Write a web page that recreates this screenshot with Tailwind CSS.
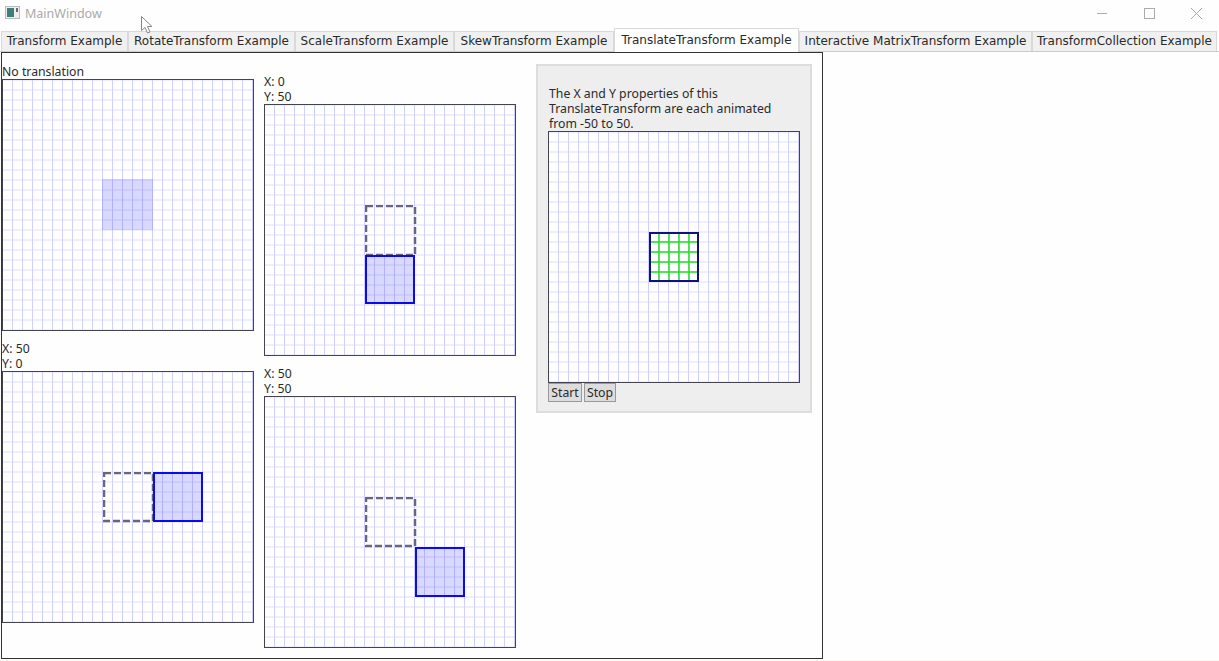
<!DOCTYPE html>
<html lang="en">
<head>
    <meta charset="UTF-8">
    <title>MainWindow</title>
    <script src="https://cdn.jsdelivr.net/npm/@tailwindcss/browser@4"></script>
</head>
<body class="bg-[#fefefe] h-[661px] w-[1219px] overflow-hidden relative font-['DejaVu_Sans',sans-serif] text-[12px] leading-[15px] text-[#2a2a2a]">
    <!-- Title bar -->
    <div class="h-[28px] flex items-center pl-[5px] pb-[2px]">
        <svg width="16" height="16" viewBox="0 0 16 16" class="mr-[4px]">
            <rect x="0.5" y="1.5" width="14" height="12" fill="#eee" stroke="#bbb"/>
            <rect x="2" y="3" width="7" height="9" fill="#3c7f78"/>
            <rect x="11" y="3" width="2" height="4" fill="#667"/>
        </svg>
        <span class="font-['Noto_Sans',sans-serif] text-[12.5px] text-[#aaa]">MainWindow</span>
        <div class="ml-auto flex mt-[2px]">
            <svg width="47" height="28" viewBox="0 0 47 28"><path d="M19 13.5h10" stroke="#aaa" fill="none"/></svg>
            <svg width="47" height="28" viewBox="0 0 47 28"><rect x="19.5" y="8.5" width="10" height="10" stroke="#aaa" fill="none"/></svg>
            <svg width="47" height="28" viewBox="0 0 47 28"><path d="M19 8l11 11M30 8l-11 11" stroke="#aaa" fill="none"/></svg>
        </div>
    </div>

    <!-- Tabs -->
    <div class="h-[24px] pl-[1px] flex items-end border-b border-[#f0c880] relative">
        <div class="w-[127px] h-[20px] bg-[#f0f0f0] border border-[#d9d9d9] border-b-0 text-center leading-[19px]">Transform Example</div>
        <div class="w-[167px] h-[20px] bg-[#f0f0f0] border border-[#d9d9d9] border-b-0 text-center leading-[19px]">RotateTransform Example</div>
        <div class="w-[159px] h-[20px] bg-[#f0f0f0] border border-[#d9d9d9] border-b-0 text-center leading-[19px]">ScaleTransform Example</div>
        <div class="w-[160px] h-[20px] bg-[#f0f0f0] border border-[#d9d9d9] border-b-0 text-center leading-[19px]">SkewTransform Example</div>
        <div class="w-[185px] h-[24px] mb-[-1px] bg-[#fefefe] border border-[#d9d9d9] border-b-0 text-center leading-[23px]">TranslateTransform Example</div>
        <div class="w-[233px] h-[20px] bg-[#f0f0f0] border border-[#d9d9d9] border-b-0 text-center leading-[19px]">Interactive MatrixTransform Example</div>
        <div class="w-[185px] h-[20px] bg-[#f0f0f0] border border-[#d9d9d9] border-b-0 text-center leading-[19px]">TransformCollection Example</div>
    </div>

    <!-- Tab content -->
    <div class="w-[822px] h-[607px] ml-[1px] border border-[#333] flex font-['Noto_Sans',sans-serif] text-[12.25px]">
        <div class="w-[262px] pt-[11px]">
            <div class="h-[15px]">No translation</div>
            <div class="relative w-[252px] h-[252px] border border-[#44444f] bg-white bg-[linear-gradient(to_right,transparent_9px,#d0d0ff_9px),linear-gradient(to_bottom,#eeeeff_1px,transparent_1px,transparent_9px,#eeeeff_9px)] bg-[size:10px_10px]">
                <div class="absolute left-[99px] top-[99px] w-[51px] h-[51px] bg-[#0000ff]/15"></div>
            </div>
            <div class="h-[30px] mt-[10px]">X: 50<br>Y: 0</div>
            <div class="relative w-[252px] h-[252px] border border-[#44444f] bg-white bg-[linear-gradient(to_right,transparent_9px,#d0d0ff_9px),linear-gradient(to_bottom,#eeeeff_1px,transparent_1px,transparent_9px,#eeeeff_9px)] bg-[size:10px_10px]">
                <svg class="absolute left-[100px] top-[100px]" width="52" height="52"><rect x="1" y="1" width="49" height="48" fill="none" stroke="#666680" stroke-width="2.5" stroke-dasharray="7 3"/></svg>
                <div class="absolute left-[150px] top-[100px] w-[50px] h-[50px] border-2 border-[#0a0aee] bg-[#0000ff]/15"></div>
            </div>
        </div>
        <div class="w-[272px] pt-[21px]">
            <div class="h-[30px]">X: 0<br>Y: 50</div>
            <div class="relative w-[252px] h-[252px] border border-[#44444f] bg-white bg-[linear-gradient(to_right,transparent_9px,#d0d0ff_9px),linear-gradient(to_bottom,#eeeeff_1px,transparent_1px,transparent_9px,#eeeeff_9px)] bg-[size:10px_10px]">
                <svg class="absolute left-[100px] top-[100px]" width="52" height="52"><rect x="1" y="1" width="49" height="49" fill="none" stroke="#666680" stroke-width="2.5" stroke-dasharray="7 3"/></svg>
                <div class="absolute left-[100px] top-[150px] w-[50px] h-[49px] border-2 border-[#0a0aee] bg-[#0000ff]/15"></div>
            </div>
            <div class="h-[30px] mt-[10px]">X: 50<br>Y: 50</div>
            <div class="relative w-[252px] h-[252px] border border-[#44444f] bg-white bg-[linear-gradient(to_right,transparent_9px,#d0d0ff_9px),linear-gradient(to_bottom,#eeeeff_1px,transparent_1px,transparent_9px,#eeeeff_9px)] bg-[size:10px_10px]">
                <svg class="absolute left-[100px] top-[100px]" width="52" height="52"><rect x="1" y="1" width="49" height="48" fill="none" stroke="#666680" stroke-width="2.5" stroke-dasharray="7 3"/></svg>
                <div class="absolute left-[150px] top-[150px] w-[50px] h-[50px] border-2 border-[#0a0aee] bg-[#0000ff]/15"></div>
            </div>
        </div>
        <div class="mt-[11px] w-[276px] h-[349px] bg-[#eeeeee] border-2 border-[#dddddd] pl-[10px] pt-[20px]">
            <p class="pl-[1px] h-[45px]">The X and Y properties of this<br>TranslateTransform are each animated<br>from -50 to 50.</p>
            <div class="relative w-[252px] h-[252px] border border-[#44444f] bg-white bg-[linear-gradient(to_right,transparent_9px,#d0d0ff_9px),linear-gradient(to_bottom,#eeeeff_1px,transparent_1px,transparent_9px,#eeeeff_9px)] bg-[size:10px_10px]">
                <svg class="absolute left-[100px] top-[100px]" width="50" height="50" viewBox="0 0 50 50">
                    <path d="M10 2v46M20 2v46M30 2v46M40 2v46M2 10h46M2 20h46M2 30h46M2 40h46" stroke="#22e022" stroke-width="1.5" fill="none"/>
                    <rect x="1" y="1" width="48" height="48" stroke="#101080" stroke-width="2" fill="none"/>
                </svg>
            </div>
            <div class="flex gap-[2px]">
                <button class="w-[34px] h-[19px] bg-[#dddddd] border border-[#999] leading-[17px]">Start</button>
                <button class="w-[32px] h-[19px] bg-[#dddddd] border border-[#999] leading-[17px]">Stop</button>
            </div>
        </div>
    </div>
    <div class="absolute left-0 right-0 bottom-0 h-[1px] bg-[#fff8e8]"></div>

    <!-- Mouse pointer in the capture -->
    <svg class="absolute left-[140px] top-[15px]" width="14" height="20" viewBox="0 0 14 20"><path d="M1.5 1.5v14l3.5-3 2.5 5.5 2.5-1-2.5-5.5h4.5z" fill="#fff" stroke="#888"/></svg>
</body>
</html>
